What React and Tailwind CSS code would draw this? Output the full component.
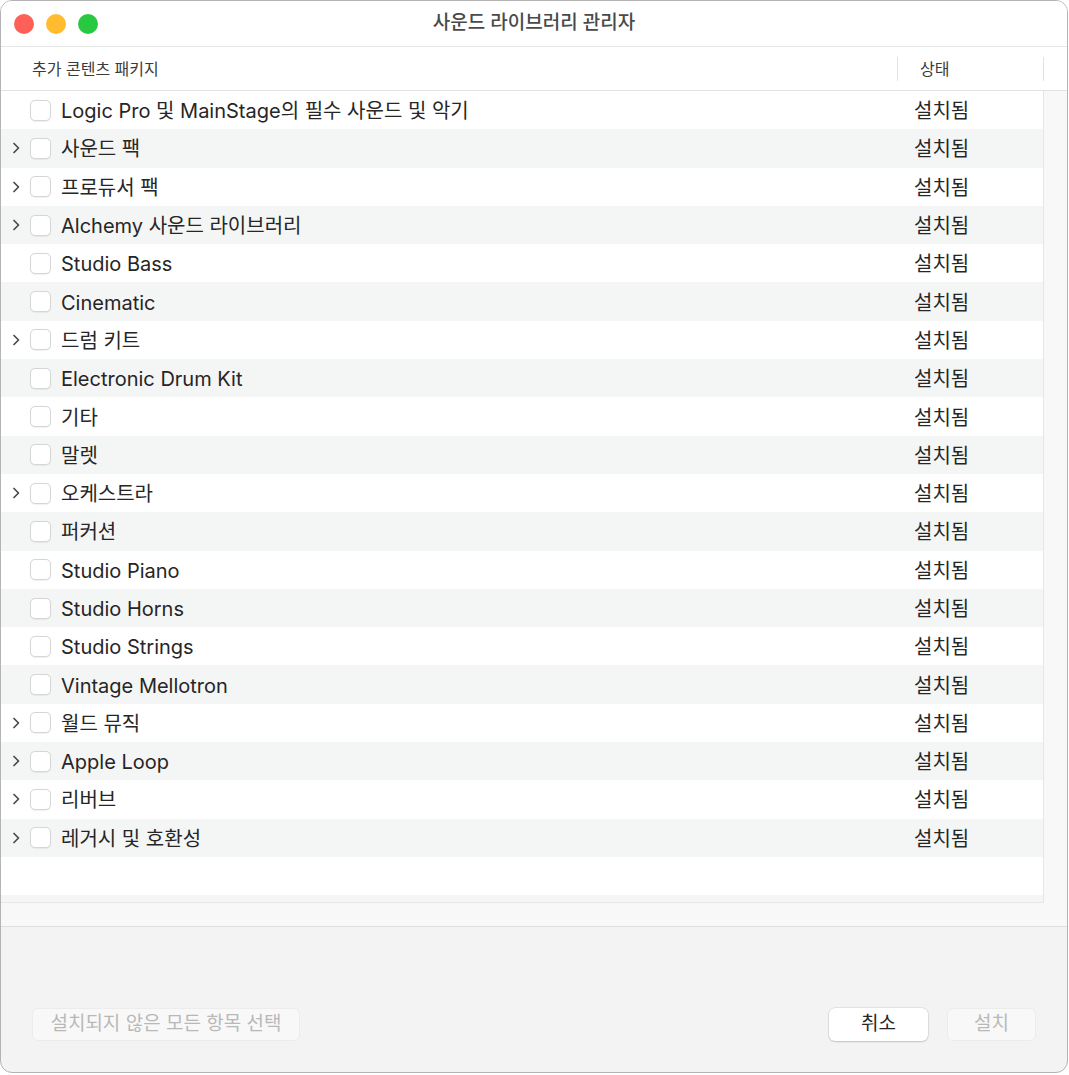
import React from "react";

const rows = [
  { name: "Logic Pro 및 MainStage의 필수 사운드 및 악기", expand: false },
  { name: "사운드 팩", expand: true },
  { name: "프로듀서 팩", expand: true },
  { name: "Alchemy 사운드 라이브러리", expand: true },
  { name: "Studio Bass", expand: false },
  { name: "Cinematic", expand: false },
  { name: "드럼 키트", expand: true },
  { name: "Electronic Drum Kit", expand: false },
  { name: "기타", expand: false },
  { name: "말렛", expand: false },
  { name: "오케스트라", expand: true },
  { name: "퍼커션", expand: false },
  { name: "Studio Piano", expand: false },
  { name: "Studio Horns", expand: false },
  { name: "Studio Strings", expand: false },
  { name: "Vintage Mellotron", expand: false },
  { name: "월드 뮤직", expand: true },
  { name: "Apple Loop", expand: true },
  { name: "리버브", expand: true },
  { name: "레거시 및 호환성", expand: true },
];

function Chevron() {
  return (
    <svg width="10" height="14" viewBox="0 0 10 14" className="text-[#4a4a4a]">
      <path d="M3 2.5 L7.5 7 L3 11.5" fill="none" stroke="currentColor" strokeWidth="1.7" strokeLinecap="round" strokeLinejoin="round" />
    </svg>
  );
}

function Row({ row, index }) {
  const striped = index % 2 === 1;
  return (
    <div className={`flex items-center h-[38.3px] ${striped ? "bg-[#f4f5f5]" : "bg-white"}`}>
      <div className="w-[29px] flex justify-center pl-[1px]">{row.expand && <Chevron />}</div>
      <div className="w-[21px] h-[21px] rounded-[5px] border border-[#d6d6d6] bg-white shadow-[0_0.5px_1px_rgba(0,0,0,0.06)]" />
      <div className="ml-[10px] flex-1 text-[20px] text-[#262626] leading-none pt-[2px]">{row.name}</div>
      <div className="w-[129px] text-[20px] text-[#262626] leading-none pt-[2px]">설치됨</div>
    </div>
  );
}

export default function App() {
  return (
    <div
      className="w-[1069px] h-[1075px] bg-white"
      style={{ fontFamily: 'Inter, "Noto Sans CJK KR", sans-serif' }}
    >
      <div className="w-[1068px] h-[1073px] rounded-[12px] border border-[#b4b4b4] bg-[#f3f3f3] overflow-hidden flex flex-col">
        <div className="h-[46px] bg-white border-b border-[#e6e6e6] flex items-center relative shrink-0">
          <div className="flex gap-[12px] pl-[13px]">
            <span className="w-[20px] h-[20px] rounded-full bg-[#fe5f57]" />
            <span className="w-[20px] h-[20px] rounded-full bg-[#febc2e]" />
            <span className="w-[20px] h-[20px] rounded-full bg-[#28c840]" />
          </div>
          <div className="absolute inset-0 flex items-center justify-center text-[19px] font-medium text-[#4a4a4a]">
            사운드 라이브러리 관리자
          </div>
        </div>

        <div className="h-[44px] bg-white border-b border-[#e3e3e3] flex items-center shrink-0">
          <div className="flex-1 pl-[31px] text-[16px] text-[#3a3a3a]">추가 콘텐츠 패키지</div>
          <div className="w-px h-[24px] bg-[#e2e2e2]" />
          <div className="w-[145px] pl-[22px] text-[16px] text-[#3a3a3a]">상태</div>
          <div className="w-px h-[24px] bg-[#e2e2e2]" />
          <div className="w-[23px]" />
        </div>

        <div className="h-[836px] flex bg-[#f8f8f8] border-b border-[#dedede] shrink-0">
          <div className="w-[1043px] h-[812px] flex flex-col overflow-hidden border-b border-r border-[#e6e6e6]">
            {rows.map((row, i) => (
              <Row key={row.name} row={row} index={i} />
            ))}
            <div className="h-[38px] bg-white shrink-0" />
            <div className="flex-1 bg-[#f4f5f5]" />
          </div>
          <div className="flex-1" />
        </div>

        <div className="flex-1 flex items-end justify-between px-[31px] pb-[31px]">
          <button className="h-[33px] w-[268px] rounded-[6px] border border-[#ececec] bg-[#f8f8f8] text-[19px] text-[#b8b8b8]">
            설치되지 않은 모든 항목 선택
          </button>
          <div className="flex gap-[19px]">
            <button className="h-[33px] w-[99px] rounded-[6px] bg-white text-[19px] text-[#262626] shadow-[0_0_0_0.5px_rgba(0,0,0,0.12),0_1px_2px_rgba(0,0,0,0.15)]">
              취소
            </button>
            <button className="h-[33px] w-[89px] rounded-[6px] border border-[#ececec] bg-[#f8f8f8] text-[19px] text-[#b8b8b8]">
              설치
            </button>
          </div>
        </div>
      </div>
    </div>
  );
}
